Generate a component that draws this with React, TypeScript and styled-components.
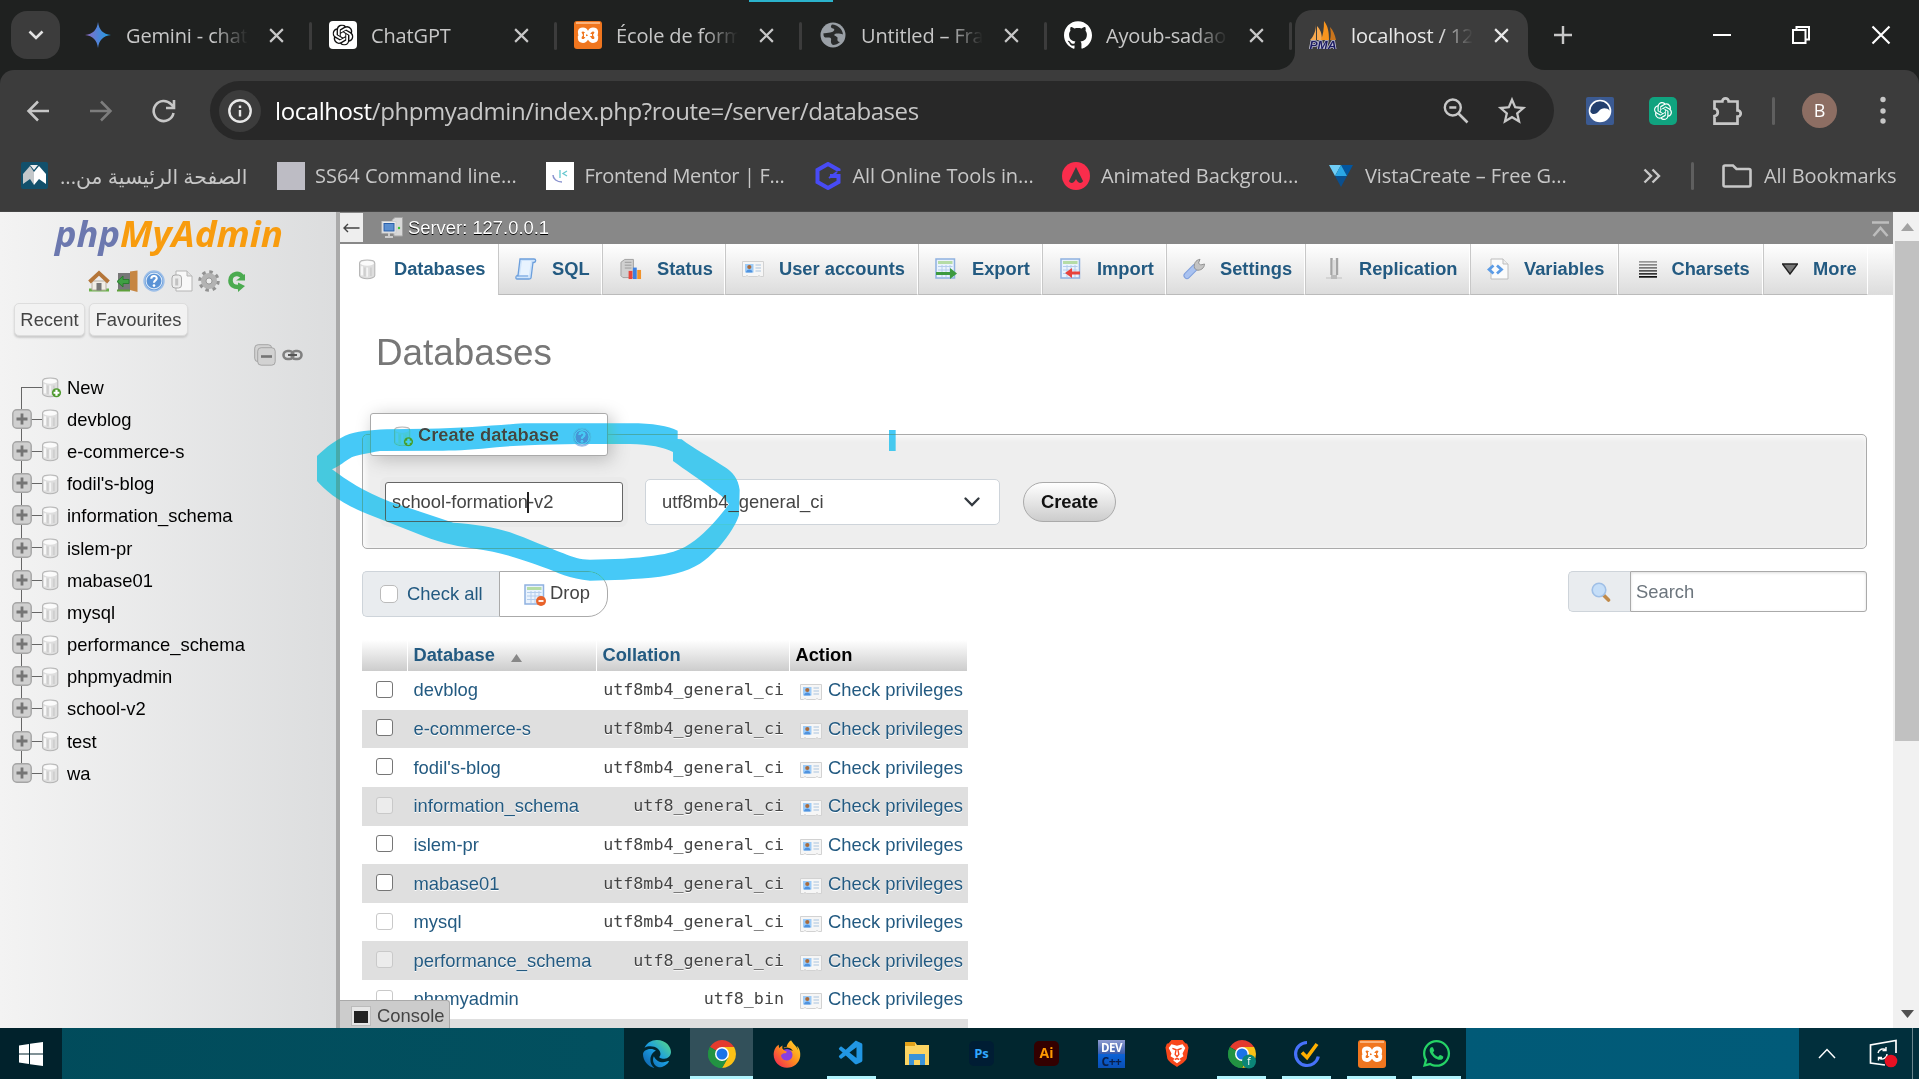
import React from "react";
import styled, { createGlobalStyle, css } from "styled-components";
import { SiOpenai, SiGithub, SiBrave } from "react-icons/si";
import { FaEdge, FaFirefoxBrowser, FaWhatsapp } from "react-icons/fa6";
import { VscVscode } from "react-icons/vsc";
import { MdStarOutline } from "react-icons/md";

const Global = createGlobalStyle`
  *, *::before, *::after { box-sizing: border-box; }
  html, body { margin: 0; padding: 0; overflow: hidden; }
  body { font-family: "Liberation Sans", Arial, sans-serif; font-size: 18.4px; color: #444; }
  svg { display: block; flex: none; }
`;

const ui = `"Open Sans", "Noto Sans", "DejaVu Sans", sans-serif`;

/* ---------- shell ---------- */
const Screen = styled.div`
  position: relative;
  width: 1919px;
  height: 1079px;
  overflow: hidden;
  display: flex;
  flex-direction: column;
  background: #1f2120;
`;

const TabStrip = styled.div`
  height: 70px;
  flex: none;
  display: flex;
  align-items: center;
  padding-left: 11px;
`;
const TabSearch = styled.div`
  width: 49px;
  height: 48px;
  margin-right: 5px;
  border-radius: 16px;
  background: #3c3c3c;
  display: grid;
  place-items: center;
`;
const BrowserTabBox = styled.div<{ $active?: boolean }>`
  position: relative;
  width: 245px;
  height: 70px;
  display: flex;
  align-items: center;
  padding: 0 0 0 19px;
  ${(p) =>
    !p.$active &&
    css`
      &::after {
        content: "";
        position: absolute;
        right: -2px;
        top: 22px;
        width: 3px;
        height: 28px;
        border-radius: 2px;
        background: #3c3c3c;
      }
    `}
`;
const ActiveShape = styled.svg`
  position: absolute;
  left: -15px;
  top: 10px;
`;
const TabIcon = styled.div`
  position: relative;
  width: 28px;
  height: 28px;
  margin-right: 14px;
  display: grid;
  place-items: center;
`;
const TabTitle = styled.div<{ $active?: boolean }>`
  position: relative;
  width: 122px;
  padding-top: 2px;
  font: 20px/30px ${ui};
  letter-spacing: -0.15px;
  white-space: nowrap;
  color: ${(p) => (p.$active ? "#e8e8e8" : "#c7c7c7")};
  mask-image: linear-gradient(to right, #000 72%, transparent 100%);
`;
const TabClose = styled.div`
  position: relative;
  width: 16px;
  margin-left: 21px;
`;
const WindowControls = styled.div`
  display: flex;
  align-items: center;
  gap: 60px;
  margin-left: 141px;
`;

const Chrome = styled.div`
  height: 142px;
  flex: none;
  background: #3c3c3c;
  border-radius: 14px 14px 0 0;
  border-bottom: 1px solid #474747;
  padding-top: 11px;
`;
const AddressRow = styled.div`
  height: 59px;
  display: flex;
  align-items: center;
`;
const NavButtons = styled.div`
  width: 210px;
  padding-left: 25px;
  display: flex;
  gap: 37px;
`;
const Omnibox = styled.div`
  width: 1344px;
  height: 59px;
  border-radius: 30px;
  background: #282828;
  display: flex;
  align-items: center;
  padding: 0 29px 0 9px;
`;
const InfoCircle = styled.div`
  width: 42px;
  height: 42px;
  border-radius: 50%;
  background: #3c3c3c;
  display: grid;
  place-items: center;
`;
const Url = styled.div`
  flex: 1;
  margin-left: 14px;
  font: 24px/34px ${ui};
  letter-spacing: -0.42px;
  color: #c7c7c7;
  white-space: nowrap;
  b { font-weight: 400; color: #fff; }
`;
const OmniIcons = styled.div`
  display: flex;
  align-items: center;
  gap: 31px;
`;
const Extensions = styled.div`
  flex: 1;
  display: flex;
  align-items: center;
  padding-left: 32px;
`;
const ExtBox = styled.div<{ $bg: string; $r: number }>`
  width: 28px;
  height: 28px;
  margin-right: 35px;
  border-radius: ${(p) => p.$r}px;
  background: ${(p) => p.$bg};
  display: grid;
  place-items: center;
`;
const Divider = styled.div<{ $m: string }>`
  width: 3px;
  height: 28px;
  border-radius: 2px;
  background: #5f5f5f;
  margin: ${(p) => p.$m};
`;
const Avatar = styled.div`
  width: 35px;
  height: 35px;
  border-radius: 50%;
  background: #8d6e63;
  color: #fff;
  font: 18px/35px ${ui};
  text-align: center;
`;
const BookmarkRow = styled.div`
  height: 71px;
  display: flex;
  align-items: center;
  padding-left: 21px;
`;
const BookmarkBox = styled.div<{ $w: number }>`
  width: ${(p) => p.$w}px;
  display: flex;
  align-items: center;
`;
const BookmarkIcon = styled.div<{ $w: number }>`
  width: ${(p) => p.$w}px;
  flex: none;
`;
const BookmarkText = styled.div<{ $ls?: number; $fs?: number }>`
  font: ${(p) => p.$fs ?? 20}px/30px ${ui};
  letter-spacing: ${(p) => p.$ls ?? 0}px;
  color: #c7c7c7;
  white-space: nowrap;
`;

/* ---------- phpMyAdmin ---------- */
const Page = styled.div`
  height: 816px;
  flex: none;
  display: flex;
  background: #fff;
  overflow: hidden;
`;
const Sidebar = styled.aside`
  width: 340px;
  flex: none;
  border-right: 4px solid #aaa;
  background: linear-gradient(to right, #f3f3f3, #dcddde);
`;
const LogoWrap = styled.div`
  height: 48px;
  padding: 3px 0 0 52px;
`;
const SideIcons = styled.div`
  margin: 10px 0 0 88px;
  display: flex;
  gap: 5.6px;
`;
const SideButtons = styled.div`
  margin: 11px 0 0 14px;
  display: flex;
  gap: 4px;
`;
const SideButton = styled.div<{ $w: number }>`
  width: ${(p) => p.$w}px;
  height: 33px;
  line-height: 32px;
  text-align: center;
  background: #f2f2f2;
  border: 1px solid #ddd;
  border-radius: 5px;
  box-shadow: 0 2px 2px #ccc;
`;
const CollapseRow = styled.div`
  margin: 8px 0 5.5px 254px;
  height: 22px;
  display: flex;
  align-items: center;
  gap: 6px;
`;
const TreeRow = styled.div<{ $first?: boolean; $last?: boolean }>`
  position: relative;
  height: 32.2px;
  padding-left: 12px;
  display: flex;
  align-items: center;
  color: #000;
  &::before {
    content: "";
    position: absolute;
    left: 21px;
    width: 1px;
    top: ${(p) => (p.$first ? "15px" : "0")};
    bottom: ${(p) => (p.$last ? "16px" : "0")};
    background: #666;
  }
  &::after {
    content: "";
    position: absolute;
    left: 21px;
    width: 21px;
    top: 15px;
    height: 1px;
    background: #666;
  }
  svg { position: relative; z-index: 1; }
`;
const TreeToggle = styled.div`
  width: 29px;
  margin-top: -2px;
`;
const TreeLabel = styled.span`
  margin-left: 5px;
  white-space: nowrap;
`;

const Main = styled.main`
  width: 1553px;
  flex: none;
  height: 816px;
  overflow: hidden;
`;
const ServerBar = styled.div`
  height: 32px;
  background: #888;
  color: #fff;
  text-shadow: 0 1px 0 #000;
  display: flex;
  align-items: center;
`;
const BackButton = styled.div`
  width: 23px;
  height: 29px;
  margin: 0 18px 1px 0;
  background: #eee;
  display: grid;
  place-items: center;
`;
const ServerText = styled.span`
  flex: 1;
  margin-left: 5px;
`;
const Menu = styled.nav`
  height: 51px;
  display: flex;
  background: linear-gradient(#fff, #dcdcdc);
`;
const MenuItem = styled.div<{ $w: number; $active?: boolean; $pad?: number }>`
  width: ${(p) => p.$w}px;
  display: flex;
  align-items: center;
  padding-left: ${(p) => p.$pad ?? 17}px;
  padding-bottom: ${(p) => (p.$active ? 1 : 0)}px;
  gap: 15px;
  color: #235a81;
  font-size: 18.3px;
  font-weight: bold;
  white-space: nowrap;
  ${(p) =>
    p.$active
      ? css`background: #fff;`
      : css`
          border-left: 1px solid #c8c8c8;
          border-right: 1px solid #fff;
          border-bottom: 1px solid #bbb;
          background: linear-gradient(#fff, #dcdcdc);
        `}
`;
const Content = styled.div`
  padding: 36px 26px 0 22px;
`;
const Heading = styled.h2`
  margin: 0 0 59px 14px;
  font-size: 36.8px;
  line-height: 44px;
  font-weight: 400;
  color: #777;
`;
const CreateBox = styled.section`
  height: 115px;
  border: 1px solid #aaa;
  border-radius: 5px;
  background: #eee;
  box-shadow: 2px 2px 6px #fff inset;
`;
const Legend = styled.div`
  width: 238px;
  height: 43px;
  margin: -22px 0 23px 7px;
  padding: 1px 0 0 22px;
  display: flex;
  align-items: center;
  background: #fff;
  border: 1px solid #aaa;
  border-radius: 3px;
  box-shadow: 4px 4px 18px #bbb;
  font-size: 18.3px;
  font-weight: bold;
  color: #444;
  svg { margin-top: 3px; }
  span { margin: 0 13px 0 4px; }
`;
const FormRow = styled.div`
  height: 46px;
  padding-left: 22px;
  display: flex;
  align-items: center;
`;
const NameInput = styled.div`
  width: 238px;
  height: 40px;
  padding-left: 6px;
  display: flex;
  align-items: center;
  background: #fff;
  border: 1px solid #666;
  border-radius: 3px;
  box-shadow: 0 0 0 5px #eaeaea;
`;
const Caret = styled.i`
  width: 2px;
  height: 21px;
  margin: 0 -1px;
  background: #222;
`;
const Select = styled.div`
  width: 355px;
  height: 46px;
  margin: 0 23px 0 22px;
  padding: 0 19px 0 16px;
  display: flex;
  align-items: center;
  justify-content: space-between;
  background: #fff;
  border: 1px solid #ced4da;
  border-radius: 5px;
`;
const CreateButton = styled.div`
  width: 93px;
  height: 40px;
  line-height: 38px;
  text-align: center;
  font-weight: bold;
  color: #111;
  border: 1px solid #aaa;
  border-radius: 20px;
  background: linear-gradient(#fff, #ccc);
`;
const Tools = styled.div`
  margin-top: 22px;
  height: 69px;
  display: flex;
  justify-content: space-between;
  align-items: flex-start;
`;
const Group = styled.div`
  display: flex;
`;
const CheckAll = styled.div`
  width: 137px;
  height: 46px;
  padding-left: 17px;
  display: flex;
  align-items: center;
  gap: 9px;
  color: #235a81;
  background: #e9ecef;
  border: 1px solid #ced4da;
  border-right: 0;
  border-radius: 5px 0 0 5px;
`;
const DropButton = styled.div`
  width: 109px;
  height: 46px;
  padding: 0 0 3px 24px;
  display: flex;
  align-items: center;
  gap: 4px;
  background: #fff;
  border: 1px solid #aaa;
  border-radius: 0 20px 20px 0;
  svg { margin-top: 4px; }
`;
const SearchIconBox = styled.div`
  width: 62px;
  height: 41px;
  padding-left: 2px;
  display: grid;
  place-items: center;
  background: #e9ecef;
  border: 1px solid #ced4da;
  border-right: 0;
  border-radius: 5px 0 0 5px;
`;
const SearchInput = styled.div`
  width: 237px;
  height: 41px;
  padding-left: 5px;
  line-height: 39px;
  color: #6c757d;
  background: #fff;
  border: 1px solid #aaa;
  border-radius: 0 3px 3px 0;
  box-shadow: inset 0 1px 3px #ddd;
`;
const cols = "46px 189px 193px 178px";
const TableHead = styled.div`
  width: 606px;
  height: 31px;
  display: grid;
  grid-template-columns: ${cols};
  font-size: 18.3px;
  font-weight: bold;
  color: #235a81;
`;
const Th = styled.div<{ $black?: boolean }>`
  display: flex;
  align-items: center;
  gap: 16px;
  padding: 0 0 1px 5.500px;
  border-right: 1px solid #fff;
  background: linear-gradient(#fff, #ccc);
  color: ${(p) => (p.$black ? "#000" : "#235a81")};
`;
const Row = styled.div<{ $odd?: boolean }>`
  width: 606px;
  height: 38.65px;
  display: grid;
  grid-template-columns: ${cols};
  align-items: center;
  color: #235a81;
  text-shadow: 0 1px 0 #fff;
  background: ${(p) => (p.$odd ? "#dfdfdf" : "#fff")};
`;
const CheckBox = styled.i<{ $off?: boolean; $size?: number; $ml?: number }>`
  display: block;
  width: ${(p) => p.$size ?? 17}px;
  height: ${(p) => p.$size ?? 17}px;
  margin: ${(p) => (p.$size ? "0" : "0 0 2px 14px")};
  border: ${(p) => (p.$size ? "1px solid #bbb" : p.$off ? "1.5px solid #c9c9c9" : "1.5px solid #767676")};
  border-radius: ${(p) => (p.$size ? 5 : 3)}px;
  background: ${(p) => (p.$off ? "rgba(255,255,255,.4)" : "#fff")};
`;
const DbCell = styled.div`
  padding-left: 5.500px;
`;
const CollationCell = styled.div`
  padding: 0 6px 2px 0;
  text-align: right;
  font: 16.7px/24px "DejaVu Sans Mono", monospace;
  color: #444;
`;
const ActionCell = styled.div`
  padding-left: 10px;
  display: flex;
  align-items: center;
  gap: 6px;
  white-space: nowrap;
  svg { margin-top: 4px; }
`;
const Console = styled.div`
  position: absolute;
  left: 340px;
  top: 1000px;
  width: 110px;
  height: 28px;
  display: flex;
  align-items: center;
  gap: 6px;
  padding: 3px 0 0 11px;
  background: #ccc;
  border: 1px solid #aaa;
  border-width: 1px 1px 0 0;
  border-radius: 0 3px 0 0;
`;
const ScrollBar = styled.div`
  width: 26px;
  flex: none;
  padding-left: 2px;
  background: #f1f1f1;
  display: flex;
  flex-direction: column;
  justify-content: space-between;
`;
const Arrow = styled.div<{ $h: number }>`
  height: ${(p) => p.$h}px;
  display: grid;
  place-items: center;
`;
const Thumb = styled.div`
  height: 500px;
  margin-bottom: auto;
  background: #c1c1c1;
`;

/* ---------- taskbar ---------- */
const TaskBar = styled.div`
  height: 51px;
  flex: none;
  display: flex;
  background: linear-gradient(to right, #014b5b 0, #02505f 600px, #015a77 1460px, #015b79 1800px);
`;
const Start = styled.div`
  width: 62px;
  display: grid;
  place-items: center;
  background: #01222c;
`;
const Apps = styled.div`
  width: 842px;
  margin-left: 562px;
  display: flex;
  background: #01262f;
`;
const AppSlot = styled.div<{ $active?: boolean; $open?: boolean }>`
  width: 65px;
  flex: none;
  display: grid;
  place-items: center;
  position: relative;
  &::before {
    content: "";
    position: absolute;
    inset: 0 1px;
    background: ${(p) => (p.$active ? "#32505a" : "transparent")};
  }
  &::after {
    content: "";
    position: absolute;
    bottom: 0;
    left: ${(p) => (p.$active ? 1 : 8)}px;
    right: ${(p) => (p.$active ? 1 : 8)}px;
    height: 3px;
    background: ${(p) => (p.$active || p.$open ? "#b0f3fd" : "transparent")};
  }
  > * { position: relative; z-index: 1; }
`;
const Tile = styled.div<{ $bg: string; $fg: string; $fs: number }>`
  width: 25px;
  height: 25px;
  border-radius: 5px;
  background: ${(p) => p.$bg};
  color: ${(p) => p.$fg};
  font: 700 ${(p) => p.$fs}px/24px ${ui};
  text-align: center;
`;
const DevTile = styled.div`
  width: 27px;
  height: 28px;
  background: linear-gradient(#8d9bd0, #3c5fae 48%, #0b62d6 52%, #0a4fb5);
  font: bold 11.5px/15px ${ui};
  text-align: center;
  color: #fff;
  letter-spacing: -0.5px;
  span { display: block; color: #0a1f4a; font-size: 12px; line-height: 13px; letter-spacing: -0.5px; }
`;
const Tray = styled.div`
  width: 120px;
  margin-left: auto;
  background: #012f3c;
  display: flex;
  align-items: center;
  padding-left: 19px;
  gap: 33px;
`;
const TrayEdge = styled.i`
  width: 1px;
  height: 51px;
  margin-left: -20px;
  background: #6a858d;
`;
const Ink = styled.svg`
  position: absolute;
  left: 310px;
  top: 400px;
  mix-blend-mode: darken;
  pointer-events: none;
`;
const TopSliver = styled.div`
  position: absolute;
  left: 749px;
  top: 0;
  width: 84px;
  height: 2px;
  background: #2bb3cc;
`;

/* ---------- icons ---------- */
const X = ({ s = 15, w = 2.3, c = "#c7c7c7" }) => (
  <svg width={s} height={s} viewBox="0 0 16 16">
    <path d="M1.2 1.2 14.8 14.8M14.8 1.2 1.2 14.8" stroke={c} strokeWidth={w} />
  </svg>
);
const Xampp = ({ s = 28 }) => (
  <svg width={s} height={s} viewBox="0 0 28 28">
    <rect width="28" height="28" rx="3" fill="#f0761f" />
    <rect x="2" y="1" width="24" height="2" fill="#fab27b" />
    <path d="M9 8.500c4 0 2.500 3.500 5 3.500s1-3.500 5-3.500c4.500 0 3.500 4.500 2 5.500 1.500 1 2.500 6-2 6-4 0-2.500-3.500-5-3.500s-1 3.500-5 3.500c-4.500 0-3.500-5-2-6-1.500-1-2.500-5.500 2-5.500z" fill="none" stroke="#fff" strokeWidth="3.800" strokeLinejoin="round" />
    <path d="M11 12v4M14 14h4" stroke="#fff" strokeWidth="2" />
  </svg>
);
const Globe = () => (
  <svg width="26" height="26" viewBox="0 0 26 26">
    <circle cx="13" cy="13" r="12.500" fill="#9aa0a6" />
    <path d="M12 2.500c-2 2-1 3.500 1 4 2.500.5 1 3-1 3.500-3 .5-5 1.500-8.500 1.200C3 15 5 16 8 15.500c3-.5 3.500 1 3 3-.4 2 .5 4 2 4.500 2.500 0 5-1 7-3-2 0-3-1.500-2.500-3.500.5-2-2-2-3-3s1-2.500 3-2 4 0 5.500 1C22.500 7 18 3 12 2.500z" fill="#2a2c2c" />
  </svg>
);
const Sails = () => (
  <svg width="28" height="28" viewBox="0 0 28 28">
    <path d="M7 3C7 9 5 15 1 19h6zM8 5v14h5C13 12 11 8 8 5z" fill="#f9a94e" />
    <path d="M15 0c0 8-1 14-3 19h8C20 11 19 5 15 0z" fill="#f7941e" />
    <path d="M21 6c1 5 1 9 0 13h6C26 14 24 9 21 6z" fill="#c9741c" />
    <text x="14" y="27.500" textAnchor="middle" textLength="27" lengthAdjust="spacingAndGlyphs" fontFamily="Liberation Sans, sans-serif" fontStyle="italic" fontWeight="bold" fontSize="11" fill="#1d1d63" stroke="#c4c4d6" strokeWidth="1.400" paintOrder="stroke">PMA</text>
  </svg>
);
const Cyl = ({ plus = false }) => (
  <svg width="21" height="21" viewBox="0 0 16 16">
    <path d="M1.200 3C1.200 1.500 4 .8 7 .8s5.800.7 5.800 2.200v9.500c0 1.500-2.800 2.500-5.800 2.500s-5.800-1-5.800-2.500z" fill="#dedede" stroke="#b4b4b4" strokeWidth=".8" />
    <ellipse cx="7" cy="3.200" rx="5" ry="1.900" fill="#fbfbfb" />
    <path d="M3 5.500v7" stroke="#f8f8f8" strokeWidth="1.600" />
    <path d="M5.200 6.500v6.700M9.800 6.500v6.500" stroke="#cfcfcf" strokeWidth="1.400" />
    <path d="M7 6.500v7" stroke="#f4f4f4" strokeWidth="1.300" />
    {plus && (
      <>
        <circle cx="11.800" cy="12" r="3.500" fill="#4e9a2e" />
        <path d="M11.800 9.800v4.400M9.600 12h4.400" stroke="#fff" strokeWidth="1.700" />
      </>
    )}
  </svg>
);
const Toggle = () => (
  <svg width="20" height="20" viewBox="0 0 20 20">
    <rect x=".8" y=".8" width="18.400" height="18.400" rx="4" fill="#cfcfcf" stroke="#a5a5a5" strokeWidth="1.400" />
    <path d="M10 4.500v11M4.500 10h11" stroke="#757575" strokeWidth="2.800" />
  </svg>
);
const IdCard = () => (
  <svg width="22" height="20" viewBox="0 0 22 20">
    <path d="M.5 2.500h21v15h-3l-1.500-1-1.500 1h-9l-1.500-1-1.500 1h-3z" fill="#f6f6f6" stroke="#d2d2d2" />
    <rect x="3" y="5" width="8.500" height="8.500" fill="#9ccbf8" />
    <circle cx="7.300" cy="8" r="2.100" fill="#a96b3c" />
    <path d="M4 13.500c0-4 6.500-4 6.500 0z" fill="#4f92de" />
    <path d="M13.500 6h5.500M13.500 9h5.500M13.500 12h5.500" stroke="#a9c4de" strokeWidth="1.200" />
  </svg>
);
const Grid = ({ children }: { children?: React.ReactNode }) => (
  <svg width="22" height="22" viewBox="0 0 22 22">
    <rect x="1" y="1" width="18.500" height="19" fill="#eaf3fd" stroke="#8fb1e0" strokeWidth="1.500" />
    <rect x="3" y="3" width="14.500" height="3" fill="#b5dca6" />
    <path d="M3 8.500h14.500M3 12h14.500M3 15.500h14.500M7 7v12M11 7v12M15 7v12" stroke="#b4cdec" />
    {children}
  </svg>
);
const HelpIcon = ({ s = 20 }) => (
  <svg width={s} height={s} viewBox="0 0 20 20">
    <circle cx="10" cy="10" r="9" fill="#5b93d6" stroke="#9dbfe8" strokeWidth="1.500" />
    <circle cx="10" cy="10" r="7.200" fill="none" stroke="#dbe9f8" strokeWidth="1" />
    <path d="M7.500 8c0-3.500 5-3.300 5-.5 0 2-2.500 1.800-2.500 4" fill="none" stroke="#fff" strokeWidth="1.900" />
    <circle cx="10" cy="14.200" r="1.200" fill="#fff" />
  </svg>
);
const ScrollIcon = () => (
  <svg width="22" height="22" viewBox="0 0 22 22">
    <path d="M5 1h14c2 0 2.500 3 0 3.500h-1L16 20c-.5 1-1 1-2 1H2c-1.500 0-1.500-3 0-3.500h1z" fill="#cfe4fb" stroke="#6c9fdc" strokeWidth="1.300" />
    <path d="M7 3h9l-2 14H5z" fill="#e8f3fe" />
    <path d="M2 18h11" stroke="#6c9fdc" />
  </svg>
);
const StatusIcon = () => (
  <svg width="22" height="22" viewBox="0 0 23 22">
    <path d="M1 4 5 1h9v19H3L1 18z" fill="#d0d0d0" stroke="#a0a0a0" />
    <path d="M5 4h7M5 7h7M5 10h7" stroke="#999" />
    <rect x="9" y="13" width="4" height="8.500" fill="#e8453b" />
    <rect x="13.500" y="9.500" width="4" height="12" fill="#3d80e0" />
    <rect x="18" y="12" width="4" height="9.500" fill="#f0932c" />
  </svg>
);
const Wrench = () => (
  <svg width="22" height="22" viewBox="0 0 22 22">
    <path d="m4 17.500 8-8" stroke="#7f9fdc" strokeWidth="7" strokeLinecap="round" />
    <path d="m4 17.500 8-8" stroke="#a9c2f0" strokeWidth="5" strokeLinecap="round" />
    <path d="M11.500 10c-1-4 1-8 5.500-8.700L15.500 5l2 2 4-1c0 4-4 7-8 6z" fill="#c4c4c4" stroke="#939393" />
  </svg>
);
const ReplIcon = () => (
  <svg width="20" height="22" viewBox="0 0 20 22">
    <path d="M7.500 0v17M13 0v17" stroke="#a5a5a5" strokeWidth="2.400" />
    <path d="M10.200 2v16" stroke="#ddd" strokeWidth="3" />
    <path d="M2 20h16" stroke="#d4d4d4" strokeWidth="2" />
    <path d="M7 17h6v4H7z" fill="#bbb" />
  </svg>
);
const VarIcon = () => (
  <svg width="22" height="22" viewBox="0 0 22 22">
    <path d="M4 1h12l5 5v15H4z" fill="#fbfbfb" stroke="#bdbdbd" />
    <path d="M16 1v5h5" fill="#eee" stroke="#bdbdbd" />
    <path d="M6.500 7.500 2 11.500l4.500 4M10 7.500l4.500 4-4.500 4" fill="none" stroke="#5a9be6" strokeWidth="2.800" />
  </svg>
);
const Lines = () => (
  <svg width="18" height="18" viewBox="0 0 18 18">
    {["#999", "#888", "#777", "#555", "#333", "#111"].map((c, i) => (
      <rect key={c} y={1 + i * 3} width="18" height="1.700" fill={c} />
    ))}
  </svg>
);
const House = () => (
  <svg width="22" height="22" viewBox="0 0 22 22">
    <path d="M1 20h20" stroke="#6ab04a" strokeWidth="3" />
    <path d="M4 11h14v9H4z" fill="#f1ede6" stroke="#b9b0a4" />
    <path d="M1.500 12 11 3 20.500 12" fill="none" stroke="#b5763a" strokeWidth="3.800" />
    <rect x="8.500" y="13" width="5" height="7.500" fill="#777" />
  </svg>
);
const Exit = () => (
  <svg width="22" height="22" viewBox="0 0 22 22">
    <rect x="2" y="3" width="13" height="17" fill="#777" />
    <path d="M14 1.500 21.500.5v21.500L14 20z" fill="#c68642" />
    <path d="M1 11.500 7 6v3.500h6v4H7V17z" fill="#3fa043" stroke="#2a7c2e" />
    <path d="M1 20.500h13" stroke="#5ea03a" strokeWidth="2" />
  </svg>
);
const DocIcon = () => (
  <svg width="22" height="22" viewBox="0 0 22 22">
    <path d="M5 1h11l5 5v15H5z" fill="#f8f8f8" stroke="#b5b5b5" />
    <path d="M16 1v5h5" fill="#e0e0e0" stroke="#b5b5b5" />
    <rect x="1" y="5" width="9.500" height="13" rx="3" fill="#ececec" stroke="#a9a9a9" />
    <path d="M5.700 8.500v7" stroke="#c2c2c2" strokeWidth="3" />
  </svg>
);
const Gear = () => (
  <svg width="22" height="22" viewBox="0 0 22 22">
    <circle cx="11" cy="11" r="9" fill="none" stroke="#929292" strokeWidth="3.500" strokeDasharray="3.400 3.669" />
    <circle cx="11" cy="11" r="5.500" fill="none" stroke="#b3b3b3" strokeWidth="5" />
    <circle cx="11" cy="11" r="3" fill="#ececec" stroke="#888" strokeWidth=".8" />
  </svg>
);
const Refresh = () => (
  <svg width="22" height="22" viewBox="0 0 22 22">
    <path d="M17 8C14.500 1.500 4.500 3 4.500 10.500c0 4.500 3.500 6.500 7.500 6.500" fill="none" stroke="#4bab50" strokeWidth="4.600" />
    <path d="M10 10.500h9V4zM12 12.500v9.500l7-6z" fill="#4bab50" />
  </svg>
);
const ServerIcon = () => (
  <svg width="22" height="22" viewBox="0 0 22 22">
    <path d="M11 3l3-2.500h7.500V19H13z" fill="#d8d8d8" stroke="#a5a5a5" />
    <rect x="1" y="4.500" width="14" height="11.500" fill="#eee" stroke="#ccc" />
    <rect x="3" y="6.500" width="10" height="7.500" fill="#5b8fd0" stroke="#2a5fa8" />
    <path d="M8 16v3M4 20h8" stroke="#ccc" strokeWidth="2" />
    <circle cx="18" cy="11" r="1.200" fill="#37c837" />
  </svg>
);
const Magnifier = () => (
  <svg width="20" height="20" viewBox="0 0 20 20">
    <path d="m12.500 13 5 5" stroke="#c08a4a" strokeWidth="3.600" strokeLinecap="round" />
    <circle cx="8" cy="8" r="6.800" fill="#c5def8" stroke="#9fbfe6" strokeWidth="1.600" />
  </svg>
);
const ChromeIcon = ({ badge = false }) => (
  <svg width="30" height="30" viewBox="0 0 30 30">
    <path d="M15 15 2.900 8A14 14 0 0 1 27.100 8z" fill="#e33b2e" />
    <path d="M15 15 15 29A14 14 0 0 1 2.900 8z" fill="#229342" />
    <path d="M15 8h12.100A14 14 0 0 1 15 29l6.100-10.500z" fill="#fbc116" />
    <path d="M8.900 18.500 2.900 8l-.1.200A14 14 0 0 0 15 29l6.100-10.500z" fill="#229342" />
    <circle cx="15" cy="15" r="7" fill="#fff" />
    <circle cx="15" cy="15" r="5.500" fill="#1a73e8" />
    {badge && (
      <>
        <circle cx="22" cy="22.500" r="7" fill="#0b8577" />
        <text x="22" y="26" textAnchor="middle" fontFamily="Open Sans, sans-serif" fontSize="10" fill="#fff">f</text>
      </>
    )}
  </svg>
);

/* ---------- data ---------- */
const browserTabs: { title: string; icon: React.ReactNode; active?: boolean }[] = [
  {
    title: "Gemini - chat",
    icon: (
      <svg width="26" height="26" viewBox="0 0 26 26">
        <path d="M13 0c1 8 5 12 13 13-8 1-12 5-13 13C12 18 8 14 0 13 8 12 12 8 13 0z" fill="url(#gem)" />
      </svg>
    ),
  },
  {
    title: "ChatGPT",
    icon: (
      <svg width="28" height="28" viewBox="0 0 28 28">
        <rect width="28" height="28" rx="4" fill="#fff" />
        <SiOpenai x="3.500" y="3.500" size={21} color="#111" />
      </svg>
    ),
  },
  { title: "École de form", icon: <Xampp /> },
  { title: "Untitled – Fra", icon: <Globe /> },
  { title: "Ayoub-sadao", icon: <SiGithub size={28} color="#fff" /> },
  { title: "localhost / 12", icon: <Sails />, active: true },
];

const menu: { label: string; w: number; icon: React.ReactNode; pad?: number; active?: boolean }[] = [
  { label: "Databases", w: 158, icon: <Cyl />, active: true, pad: 18 },
  { label: "SQL", w: 104, icon: <ScrollIcon />, pad: 16 },
  { label: "Status", w: 123, icon: <StatusIcon />, pad: 17 },
  { label: "User accounts", w: 193, icon: <IdCard />, pad: 16 },
  { label: "Export", w: 124, icon: <Grid><path d="M1 14h14v-4l7 5.500-7 5.500v-4H1z" fill="#3d9a3f" /></Grid>, pad: 16 },
  { label: "Import", w: 124, icon: <Grid><path d="M20 13.500h-8v-3.500L5 15l7 5v-3.500h8z" fill="#e8433d" /></Grid>, pad: 17 },
  { label: "Settings", w: 139, icon: <Wrench />, pad: 16 },
  { label: "Replication", w: 165, icon: <ReplIcon />, pad: 18 },
  { label: "Variables", w: 148, icon: <VarIcon />, pad: 16 },
  { label: "Charsets", w: 145, icon: <Lines />, pad: 19.5 },
  {
    label: "More",
    w: 105,
    pad: 18,
    icon: (
      <svg width="16" height="12" viewBox="0 0 16 12">
        <path d="M.5 1h15L8 11z" fill="#777" stroke="#222" strokeWidth="1.400" />
      </svg>
    ),
  },
];

const tree = ["New", "devblog", "e-commerce-s", "fodil's-blog", "information_schema", "islem-pr", "mabase01", "mysql", "performance_schema", "phpmyadmin", "school-v2", "test", "wa"];

const rows: [string, string, boolean][] = [
  ["devblog", "utf8mb4_general_ci", false],
  ["e-commerce-s", "utf8mb4_general_ci", false],
  ["fodil's-blog", "utf8mb4_general_ci", false],
  ["information_schema", "utf8_general_ci", true],
  ["islem-pr", "utf8mb4_general_ci", false],
  ["mabase01", "utf8mb4_general_ci", false],
  ["mysql", "utf8mb4_general_ci", true],
  ["performance_schema", "utf8_general_ci", true],
  ["phpmyadmin", "utf8_bin", true],
];

const bookmarks: { text: string; w: number; iw: number; ls?: number; fs?: number; rtl?: boolean; icon: React.ReactNode }[] = [
  {
    text: "الصفحة الرئيسية من...", w: 256, iw: 39, rtl: true, fs: 20.4,
    icon: (
      <svg width="27" height="27" viewBox="0 0 27 27">
        <rect width="27" height="27" rx="2" fill="#12506b" />
        <path d="M9 3h8l-4 5z" fill="#eee" />
        <path d="M2 22V12l7-8 4 6v13l-4-6z" fill="#c4c8ca" />
        <path d="M25 22V12l-7-8-5 6v13l5-6z" fill="#fff" />
      </svg>
    ),
  },
  { text: "SS64 Command line...", w: 269, iw: 38, icon: <svg width="28" height="28"><rect width="28" height="28" fill="#bdbcc4" /></svg> },
  {
    text: "Frontend Mentor | F...", w: 269, iw: 38.5, ls: -0.33,
    icon: (
      <svg width="28" height="28" viewBox="0 0 28 28">
        <rect width="28" height="28" fill="#fff" />
        <path d="M7 13c0 4 4 7 9 7" fill="none" stroke="#8a93cf" strokeWidth="1.500" />
        <path d="M14 8v8M21 9l-4 2.500 4 2.500" fill="none" stroke="#67c8d0" strokeWidth="1.300" />
      </svg>
    ),
  },
  {
    text: "All Online Tools in...", w: 247, iw: 37.5, ls: -0.06,
    icon: (
      <svg width="26" height="28" viewBox="0 0 26 28">
        <path d="M23.500 9V8L13 2 2.500 8v12L13 26l10.500-6v-6H15" fill="none" stroke="#484bf5" strokeWidth="4" />
        <path d="M14 16l8-6" stroke="#484bf5" strokeWidth="2" />
      </svg>
    ),
  },
  {
    text: "Animated Backgrou...", w: 267, iw: 39, ls: -0.06,
    icon: (
      <svg width="28" height="28" viewBox="0 0 28 28">
        <circle cx="14" cy="14" r="14" fill="#fa2d4c" />
        <path d="M14 5 21 19c-2 3.500-5 2-7-2-2 4-5 5.500-7 2z" fill="#3c3c3c" />
      </svg>
    ),
  },
  {
    text: "VistaCreate – Free G...", w: 314, iw: 36, ls: -0.06,
    icon: (
      <svg width="24" height="22" viewBox="0 0 24 22">
        <path d="M0 0h12L6 11z" fill="#6fcdf6" />
        <path d="M12 0h12l-6 11z" fill="#02569f" />
        <path d="M6 11 12 0l6 11z" fill="#2aa7e6" />
        <path d="M6 11h12l-6 11z" fill="#0a4f8e" />
      </svg>
    ),
  },
];

export default function App() {
  return (
    <Screen>
      <Global />
      <svg width="0" height="0" style={{ position: "absolute" }}>
        <defs>
          <linearGradient id="gem"><stop offset="0" stopColor="#9168c0" /><stop offset=".5" stopColor="#4f84d8" /><stop offset="1" stopColor="#1ba1e3" /></linearGradient>
          <linearGradient id="edge" x1="0" y1="1" x2="1" y2="0"><stop offset="0" stopColor="#0c59a4" /><stop offset=".5" stopColor="#1b9de2" /><stop offset="1" stopColor="#5ee07f" /></linearGradient>
          <linearGradient id="fox" x1="1" y1="0" x2="0" y2="1"><stop offset="0" stopColor="#ffe226" /><stop offset=".5" stopColor="#ff8a1f" /><stop offset="1" stopColor="#f2175c" /></linearGradient>
        </defs>
      </svg>

      <TabStrip>
        <TabSearch>
          <svg width="16" height="10" viewBox="0 0 16 10"><path d="M1.500 1.500 8 8l6.500-6.500" fill="none" stroke="#e3e3e3" strokeWidth="2.600" /></svg>
        </TabSearch>
        {browserTabs.map((t) => (
          <BrowserTabBox key={t.title} $active={t.active}>
            {t.active && (
              <ActiveShape width="270" height="60" viewBox="0 0 270 60">
                <path d="M0 60c12 0 20-8 20-18V18C20 7 27 0 38 0h197c11 0 18 7 18 18v24c0 10 6 18 17 18z" fill="#3c3c3c" />
              </ActiveShape>
            )}
            <TabIcon>{t.icon}</TabIcon>
            <TabTitle $active={t.active}>{t.title}</TabTitle>
            <TabClose><X c={t.active ? "#e8e8e8" : "#c7c7c7"} /></TabClose>
          </BrowserTabBox>
        ))}
        <svg width="18" height="18" viewBox="0 0 18 18" style={{ marginLeft: 19 }}><path d="M9 0v18M0 9h18" stroke="#c7c7c7" strokeWidth="2.400" /></svg>
        <WindowControls>
          <svg width="18" height="18"><path d="M0 9h18" stroke="#fff" strokeWidth="2" /></svg>
          <svg width="20" height="20" viewBox="0 0 20 20"><path d="M2 5h12.500v13H2zM5.500 5V2H18v12.500h-3" fill="none" stroke="#fff" strokeWidth="2" /></svg>
          <X s={20} w={1.700} c="#fff" />
        </WindowControls>
      </TabStrip>

      <Chrome>
        <AddressRow>
          <NavButtons>
            <svg width="26" height="26" viewBox="0 0 26 26"><path d="M24 13H4M13 3.500 3.500 13l9.500 9.500" fill="none" stroke="#c7c7c7" strokeWidth="2.500" /></svg>
            <svg width="26" height="26" viewBox="0 0 26 26"><path d="M2 13h20M13 3.500l9.500 9.500-9.500 9.500" fill="none" stroke="#7d7d7d" strokeWidth="2.500" /></svg>
            <svg width="26" height="26" viewBox="0 0 26 26"><path d="M22.500 15A10 10 0 1 1 20 6.200l2.500 2.500M23 2v8h-8" fill="none" stroke="#c7c7c7" strokeWidth="2.600" /></svg>
          </NavButtons>
          <Omnibox>
            <InfoCircle>
              <svg width="24" height="24" viewBox="0 0 24 24"><circle cx="12" cy="12" r="10.700" fill="none" stroke="#e8e8e8" strokeWidth="2.400" /><path d="M12 11v6.500M12 6.500v2.600" stroke="#e8e8e8" strokeWidth="2.400" /></svg>
            </InfoCircle>
            <Url><b>localhost</b>/phpmyadmin/index.php?route=/server/databases</Url>
            <OmniIcons>
              <svg width="26" height="26" viewBox="0 0 26 26"><circle cx="9.800" cy="9.500" r="8" fill="none" stroke="#c7c7c7" strokeWidth="2.400" /><path d="m15.500 15.500 9 9M6.300 9.500h7" stroke="#c7c7c7" strokeWidth="2.600" /></svg>
              <MdStarOutline size={34} color="#c7c7c7" style={{ marginLeft: -5, marginRight: -4 }} />
            </OmniIcons>
          </Omnibox>
          <Extensions>
            <ExtBox $bg="#3b5a92" $r={2}>
              <svg width="24" height="24" viewBox="0 0 24 24"><circle cx="12" cy="12" r="10.500" fill="#233f6e" stroke="#fff" strokeWidth="1.600" /><path d="M1.500 12c3 5 7 3 9.500 0s7-4 11.500 0a10.500 10.500 0 0 1-21 0z" fill="#fff" /></svg>
            </ExtBox>
            <ExtBox $bg="#10a37f" $r={5}><SiOpenai size={18} color="#fff" /></ExtBox>
            <svg width="30" height="30" viewBox="0 0 30 30"><path d="M2.500 5.500h7.800a3.200 3.200 0 0 1 6.400 0h8.800v8.800a3.200 3.200 0 0 1 0 6.400v7h-23v-7.500a3.900 3.900 0 0 0 0-7.700z" fill="none" stroke="#c7c7c7" strokeWidth="2.700" /></svg>
            <Divider $m="0 27px 0 30px" />
            <Avatar>B</Avatar>
            <svg width="6" height="30" viewBox="0 0 6 30" style={{ marginLeft: 43 }}><circle cx="3" cy="3.500" r="2.700" fill="#c7c7c7" /><circle cx="3" cy="15" r="2.700" fill="#c7c7c7" /><circle cx="3" cy="25" r="2.700" fill="#c7c7c7" /></svg>
          </Extensions>
        </AddressRow>
        <BookmarkRow>
          {bookmarks.map((b) => (
            <BookmarkBox key={b.text} $w={b.w}>
              <BookmarkIcon $w={b.iw}>{b.icon}</BookmarkIcon>
              <BookmarkText $ls={b.ls} $fs={b.fs} dir={b.rtl ? "rtl" : undefined}>{b.text}</BookmarkText>
            </BookmarkBox>
          ))}
          <svg width="18" height="16" viewBox="0 0 18 16"><path d="m1.500 1.500 6.500 6.500-6.500 6.500M9.500 1.500 16 8l-6.500 6.500" fill="none" stroke="#c7c7c7" strokeWidth="2.400" /></svg>
          <Divider $m="0 28px 0 30px" />
          <svg width="30" height="24" viewBox="0 0 30 24" style={{ marginRight: 12 }}><path d="M1.500 3c0-1 .6-1.500 1.500-1.500h8l3.500 3.500H27c1 0 1.500.6 1.500 1.500V21c0 1-.6 1.500-1.500 1.500H3c-1 0-1.500-.6-1.500-1.500z" fill="none" stroke="#c7c7c7" strokeWidth="2.600" /></svg>
          <BookmarkText $ls={-0.06}>All Bookmarks</BookmarkText>
        </BookmarkRow>
      </Chrome>

      <Page>
        <Sidebar>
          <LogoWrap>
            <svg width="234" height="44" viewBox="0 0 234 44">
              <text x="3" y="32" fontFamily="Open Sans, sans-serif" fontStyle="italic" fontWeight="700" fontSize="35" textLength="65" lengthAdjust="spacingAndGlyphs" fill="#6c78af">php</text>
              <text x="68" y="32" fontFamily="Open Sans, sans-serif" fontStyle="italic" fontWeight="700" fontSize="35" textLength="163" lengthAdjust="spacingAndGlyphs" fill="#f89c0e">MyAdmin</text>
            </svg>
          </LogoWrap>
          <SideIcons><House /><Exit /><HelpIcon s={22} /><DocIcon /><Gear /><Refresh /></SideIcons>
          <SideButtons>
            <SideButton $w={71}>Recent</SideButton>
            <SideButton $w={99}>Favourites</SideButton>
          </SideButtons>
          <CollapseRow>
            <svg width="22" height="22" viewBox="0 0 22 22"><rect x=".7" y=".7" width="17" height="17" rx="3.500" fill="#d2d2d2" stroke="#a5a5a5" /><rect x="3.700" y="3.700" width="17.500" height="17.500" rx="3.500" fill="#d2d2d2" stroke="#a5a5a5" /><path d="M7 12.500h11" stroke="#757575" strokeWidth="2.600" /></svg>
            <svg width="21" height="12" viewBox="0 0 21 12"><rect x="1.500" y="2" width="10" height="8" rx="4" fill="none" stroke="#808080" strokeWidth="2.600" /><rect x="9.500" y="2" width="10" height="8" rx="4" fill="none" stroke="#808080" strokeWidth="2.600" /><path d="M6 6h9" stroke="#555" strokeWidth="2" /></svg>
          </CollapseRow>
          {tree.map((t, i) => (
            <TreeRow key={t} $first={i === 0} $last={i === tree.length - 1}>
              <TreeToggle>{i > 0 && <Toggle />}</TreeToggle>
              <Cyl plus={i === 0} />
              <TreeLabel>{t}</TreeLabel>
            </TreeRow>
          ))}
        </Sidebar>

        <Main>
          <ServerBar>
            <BackButton>
              <svg width="17" height="10" viewBox="0 0 17 10"><path d="M16.500 5H1.500M5 1 1 5l4 4" fill="none" stroke="#444" strokeWidth="1.400" /></svg>
            </BackButton>
            <ServerIcon />
            <ServerText>Server: 127.0.0.1</ServerText>
            <svg width="17" height="16" viewBox="0 0 17 16" style={{ marginRight: 4, marginTop: 2 }}><path d="M0 1.500h17M1.500 15l7-8 7 8" fill="none" stroke="#bdbdbd" strokeWidth="2.600" /></svg>
          </ServerBar>
          <Menu>
            {menu.map((m) => (
              <MenuItem key={m.label} $w={m.w} $pad={m.pad} $active={m.active}>
                {m.icon}
                {m.label}
              </MenuItem>
            ))}
          </Menu>
          <Content>
            <Heading>Databases</Heading>
            <CreateBox>
              <Legend><Cyl plus /><span>Create database</span><HelpIcon /></Legend>
              <FormRow>
                <NameInput>school-formation<Caret />-v2</NameInput>
                <Select>
                  utf8mb4_general_ci
                  <svg width="16" height="10" viewBox="0 0 16 10"><path d="M1.500 1.500 8 8l6.500-6.500" fill="none" stroke="#343a40" strokeWidth="2.300" strokeLinecap="round" /></svg>
                </Select>
                <CreateButton>Create</CreateButton>
              </FormRow>
            </CreateBox>
            <Tools>
              <Group>
                <CheckAll><CheckBox $size={18} />Check all</CheckAll>
                <DropButton>
                  <Grid><circle cx="17" cy="17" r="5" fill="#e8622a" /><path d="M14.500 17h5" stroke="#fff" strokeWidth="1.800" /></Grid>
                  Drop
                </DropButton>
              </Group>
              <Group>
                <SearchIconBox><Magnifier /></SearchIconBox>
                <SearchInput>Search</SearchInput>
              </Group>
            </Tools>
            <TableHead>
              <Th />
              <Th>Database<svg width="11" height="8" viewBox="0 0 11 8" style={{ marginTop: 5 }}><path d="M5.500 0 11 8H0z" fill="#888" /></svg></Th>
              <Th>Collation</Th>
              <Th $black>Action</Th>
            </TableHead>
            {rows.map(([name, coll, off], i) => (
              <Row key={name} $odd={i % 2 === 1}>
                <CheckBox $off={off} />
                <DbCell>{name}</DbCell>
                <CollationCell>{coll}</CollationCell>
                <ActionCell><IdCard />Check privileges</ActionCell>
              </Row>
            ))}
            <Row $odd />
          </Content>
        </Main>
        <ScrollBar>
          <Arrow $h={29}><svg width="13" height="8"><path d="M6.500 0 13 8H0z" fill="#a3a3a3" /></svg></Arrow>
          <Thumb />
          <Arrow $h={28}><svg width="13" height="8"><path d="M0 0h13L6.500 8z" fill="#505050" /></svg></Arrow>
        </ScrollBar>
      </Page>

      <TaskBar>
        <Start>
          <svg width="24" height="24" viewBox="0 0 24 24"><path d="M0 3.500 10 2v9.500H0zM11 1.800 24 0v11.500H11zM0 12.500h10V22L0 20.500zM11 12.500h13V24l-13-1.800z" fill="#fff" /></svg>
        </Start>
        <Apps>
          <AppSlot><FaEdge size={28} fill="url(#edge)" stroke="none" /></AppSlot>
          <AppSlot $active><ChromeIcon /></AppSlot>
          <AppSlot>
            <svg width="28" height="28" viewBox="0 0 28 28"><circle cx="14" cy="15.500" r="6.500" fill="#8a3fe0" /><FaFirefoxBrowser size={28} fill="url(#fox)" stroke="none" /></svg>
          </AppSlot>
          <AppSlot $open><VscVscode size={29} color="#2196e3" /></AppSlot>
          <AppSlot>
            <svg width="26" height="24" viewBox="0 0 26 24"><path d="M1 0h10l2 3h12v20H1z" fill="#fcd462" /><path d="M1 0h10v4H1z" fill="#e3a21a" /><path d="M5 23V12h16v11h-5v-5h-6v5z" fill="#3b92d8" /></svg>
          </AppSlot>
          <AppSlot><Tile $bg="#001d34" $fg="#31a8ff" $fs={13}>Ps</Tile></AppSlot>
          <AppSlot><Tile $bg="#330000" $fg="#ff9a00" $fs={14}>Ai</Tile></AppSlot>
          <AppSlot><DevTile>DEV<span>C++</span></DevTile></AppSlot>
          <AppSlot>
            <svg width="24" height="29" viewBox="0 0 26 29"><path d="M7 0h12l3 3.500 2 .5 1.500 4-2 12c-1 3-5.500 6-10.500 9C8 26 3.500 23 2.500 20L.5 8 2 4l2-.5z" fill="#f8471b" /><path d="M13 6l6-1.500 3 4-3 6 1 3-4 2.500 1 2-4 3-4-3 1-2-4-2.500 1-3-3-6 3-4z" fill="#fff" /><path d="m8 9 4 1.500-1 5 2 2.500 2-2.500-1-5L18 9M10.500 21l2.500-1 2.500 1" fill="none" stroke="#f8471b" strokeWidth="1.500" /></svg>
          </AppSlot>
          <AppSlot $open><ChromeIcon badge /></AppSlot>
          <AppSlot $open>
            <svg width="28" height="28" viewBox="0 0 28 28"><path d="M14 2.500a11.500 11.500 0 1 0 11.300 14" fill="none" stroke="#4772fa" strokeWidth="3.200" /><path d="M9 12.500l5 5L24 4" fill="none" stroke="#ffb000" strokeWidth="3.600" /></svg>
          </AppSlot>
          <AppSlot $open><Xampp /></AppSlot>
          <AppSlot $open><FaWhatsapp size={31} color="#25d366" /></AppSlot>
        </Apps>
        <Tray>
          <svg width="18" height="11" viewBox="0 0 18 11"><path d="M1 10 9 1.500 17 10" fill="none" stroke="#fff" strokeWidth="1.500" /></svg>
          <svg width="30" height="30" viewBox="0 0 30 30"><path d="M27 14V1.500L1.500 6v18L16 26" fill="none" stroke="#fff" strokeWidth="1.700" /><path d="M9 14a5 5 0 0 1 8-3M18 15a5 5 0 0 1-8 4M17 8v3.500h-3.500M9.500 21.500v-3H13" fill="none" stroke="#fff" strokeWidth="1.400" /><circle cx="22" cy="22" r="6.300" fill="#e81123" /></svg>
          <TrayEdge />
        </Tray>
      </TaskBar>

      <Console>
        <svg width="20" height="20" viewBox="0 0 20 20"><rect x=".5" y=".5" width="19" height="19" fill="#e6e6e6" stroke="#bbb" /><rect x="3" y="5" width="14" height="12" fill="#222" /></svg>
        Console
      </Console>

      <Ink width="600" height="200" viewBox="0 0 1800 600">
        <path
          fillRule="evenodd"
          fill="#46c9f7"
          d="M1103 92C1075 78 1030 70 960 70L640 70C560 75 470 84 350 86L230 88C180 90 140 94 105 107C75 122 50 140 21 168L21 243C50 275 90 310 180 345L340 408C400 432 450 440 500 447C560 455 620 472 700 502C740 516 780 538 840 542C900 541 980 538 1050 530C1120 520 1165 500 1195 472L1228 440C1258 405 1280 370 1287 345L1289 270C1285 235 1265 215 1250 205C1200 172 1150 145 1115 118L1103 117ZM1089 156C1060 142 1020 133 960 132L880 132C760 132 640 134 560 142C490 150 430 153 380 152L210 153C170 160 140 165 125 172C105 183 90 198 66 208C110 240 160 275 240 305L430 368C490 372 550 380 600 397C650 415 720 445 760 460C790 472 810 479 840 479L940 476C1010 471 1060 464 1090 455C1140 440 1175 405 1200 380C1222 357 1240 335 1257 313C1240 290 1225 280 1210 270C1165 235 1125 210 1089 183Z"
        />
        <rect x="1737" y="90" width="20" height="63" fill="#46c9f7" />
      </Ink>
      <TopSliver />
    </Screen>
  );
}
